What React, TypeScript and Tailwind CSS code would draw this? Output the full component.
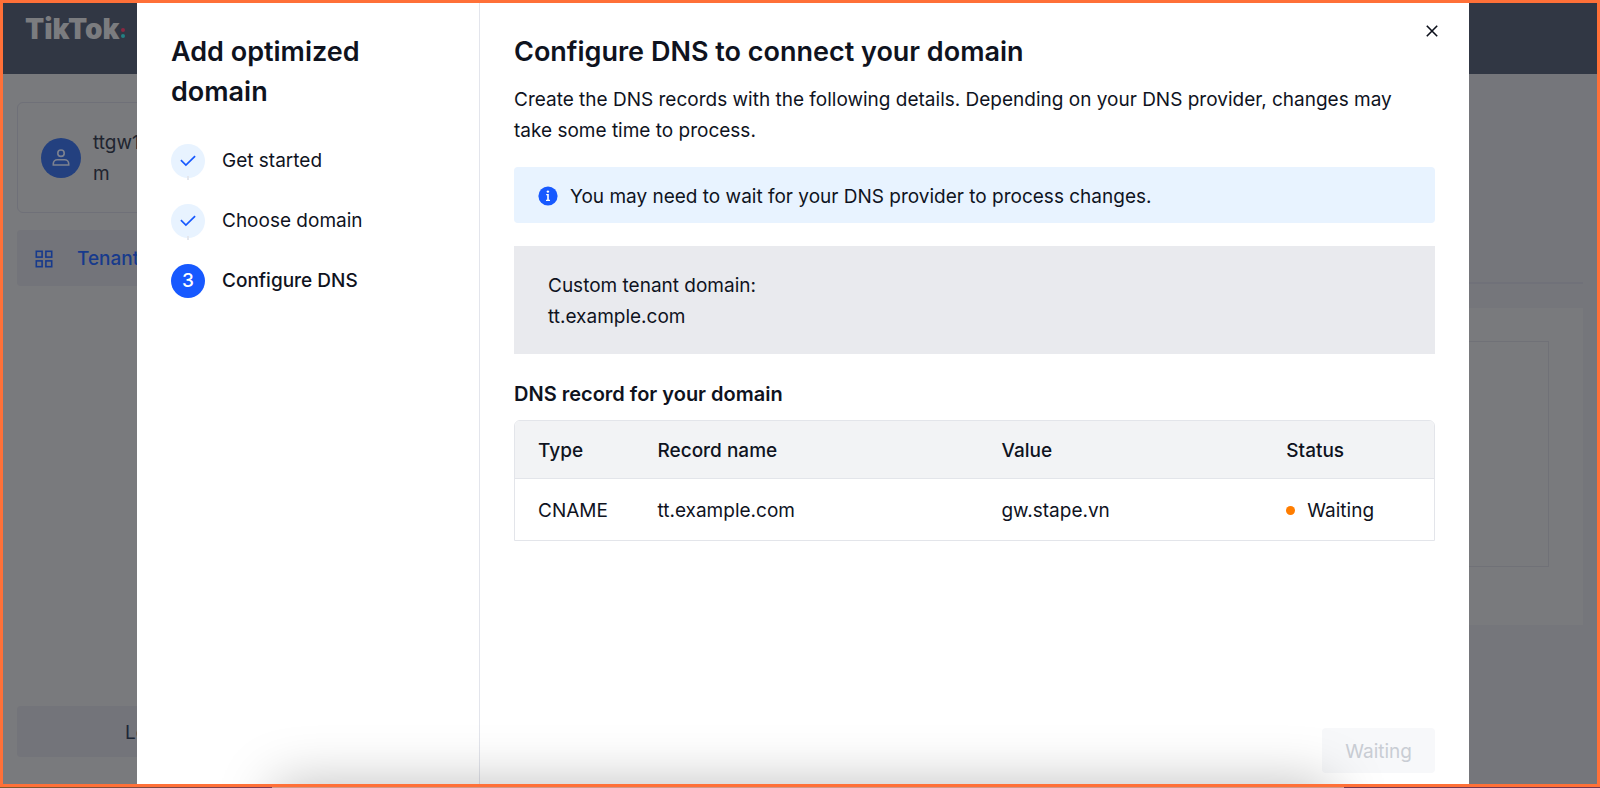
import type { ReactNode } from "react"

const steps = [
    { label: "Get started", done: true },
    { label: "Choose domain", done: true },
    { label: "Configure DNS", done: false },
]

const records = [
    { type: "CNAME", name: "tt.example.com", value: "gw.stape.vn", status: "Waiting" },
]

function CheckIcon() {
    return <svg width="16" height="12" viewBox="0 0 16 12" fill="none" stroke="#1759ff" strokeWidth="1.7" aria-hidden="true">
        <path d="M0.9 5.2 L5.9 10 L15.1 1.2" />
    </svg>
}

function UserIcon() {
    return <svg width="18" height="18" viewBox="0 0 18 18" fill="none" stroke="#7d8290" strokeWidth="1.6" aria-hidden="true">
        <circle cx="9" cy="4.2" r="3.2" />
        <path d="M1.3 16 V14.6 A4 4 0 0 1 5.3 10.8 H12.7 A4 4 0 0 1 16.7 14.6 V16 Z" />
    </svg>
}

function GridIcon() {
    return <svg width="18" height="18" viewBox="0 0 18 18" fill="none" stroke="#173a8c" strokeWidth="1.6" aria-hidden="true">
        <rect x="1.3" y="1.3" width="5.8" height="5.8" />
        <rect x="10.9" y="1.3" width="5.8" height="5.8" />
        <rect x="1.3" y="10.9" width="5.8" height="5.8" />
        <rect x="10.9" y="10.9" width="5.8" height="5.8" />
    </svg>
}

function InfoIcon() {
    return <svg width="20" height="20" viewBox="0 0 20 20" className="shrink-0" aria-hidden="true">
        <circle cx="10" cy="10" r="9.6" fill="#1759ff" />
        <g fill="#ffffff">
            <circle cx="9.9" cy="5.6" r="1.2" />
            <path d="M8.2 8 H10.8 V13.8 H12 V15 H8 V13.8 H9.2 V9.2 H8.2 Z" />
        </g>
    </svg>
}

function CloseIcon() {
    return <svg width="12" height="12" viewBox="0 0 12 12" fill="none" stroke="#0b0f1a" strokeWidth="1.6" aria-hidden="true">
        <path d="M0.8 0.8 L11.2 11.2 M11.2 0.8 L0.8 11.2" />
    </svg>
}

function Backdrop() {
    return <div className="flex h-full flex-col bg-[#75767b]">
        <header className="h-[71px] shrink-0 bg-[#313744] px-[22px] pt-1.5">
            <span className="flex items-center text-[28px] leading-10 font-black text-[#7b7c7f]">
                TikTok
                <span className="ml-0.5 mt-2 flex flex-col gap-0.5">
                    <span className="size-1 rounded-full bg-[#8a2741]" />
                    <span className="size-1 rounded-full bg-[#238083]" />
                </span>
            </span>
        </header>
        <div className="flex min-h-0 flex-1">
            <aside className="flex w-[312px] shrink-0 flex-col bg-[#797a7d] px-3.5 pt-7 pb-[27px]">
                <div className="flex h-[111px] items-center gap-3 rounded-md border border-[#6f7078] px-[23px] text-[19px] leading-[31px] text-[#20242f]">
                    <span className="flex size-10 shrink-0 items-center justify-center rounded-full bg-[#23407f]">
                        <UserIcon />
                    </span>
                    <span>ttgw1<br />m</span>
                </div>
                <a href="#tenant" className="mt-[17px] flex h-14 items-center gap-6 rounded-sm bg-[#73747a] px-[18px] pt-0.5 text-[19px] font-medium text-[#173a8c]">
                    <GridIcon />
                    Tenant
                </a>
                <button className="mt-auto h-[51px] rounded-sm bg-[#73747a] pt-1 text-[19px] text-[#1c2636]">Log out</button>
            </aside>
            <div className="flex-1 px-3.5">
                <div className="h-[210px] border-b-2 border-[#707179]" />
                <div className="mt-6 bg-[#797a7d] px-[34px] pt-[33px] pb-[58px]">
                    <div className="h-[226px] border border-[#707177]" />
                </div>
            </div>
        </div>
    </div>
}

function Stepper() {
    return <ol className="mt-8 flex flex-col gap-[26px]">
        {steps.map((step, i) => (
            <li key={step.label} className="relative flex items-center gap-[17px] text-[19px] leading-[34px]">
                {step.done && <span className="absolute top-8 left-4 h-1 w-0.5 bg-[#e4e7ee]" />}
                {step.done
                    ? <span className="flex size-[34px] items-center justify-center rounded-full bg-[#e8f3ff]"><CheckIcon /></span>
                    : <span className="flex size-[34px] items-center justify-center rounded-full bg-[#1759ff] font-medium text-white">{i + 1}</span>}
                <span className={step.done ? "" : "font-medium"}>{step.label}</span>
            </li>
        ))}
    </ol>
}

function HeadCell({ children, className }: { children: ReactNode, className?: string }) {
    return <th scope="col" className={`border-b border-[#e3e5ea] px-[23px] pt-3.5 pb-3 text-left font-medium ${className ?? ""}`}>{children}</th>
}

function Cell({ children }: { children: ReactNode }) {
    return <td className="px-[23px] pt-4 pb-3.5">{children}</td>
}

function RecordsTable() {
    return <div className="overflow-hidden rounded-t-md border border-[#e3e5ea]">
        <table className="w-full table-fixed border-collapse text-[19px] leading-[31px]">
            <thead className="bg-[#f2f3f5]">
                <tr>
                    <HeadCell className="w-[13%]">Type</HeadCell>
                    <HeadCell className="w-[344px]">Record name</HeadCell>
                    <HeadCell className="w-[31%]">Value</HeadCell>
                    <HeadCell>Status</HeadCell>
                </tr>
            </thead>
            <tbody>
                {records.map((r) => (
                    <tr key={r.name}>
                        <Cell>{r.type}</Cell>
                        <Cell>{r.name}</Cell>
                        <Cell>{r.value}</Cell>
                        <Cell>
                            <span className="flex items-center gap-3">
                                <span className="size-[9px] rounded-full bg-[#ff7d00]" />
                                {r.status}
                            </span>
                        </Cell>
                    </tr>
                ))}
            </tbody>
        </table>
    </div>
}

export default function App() {
    return <div className="h-screen bg-[linear-gradient(to_right,#7b5a2e,#7a3a55_17%,#d09a8c_17%,#d09a8c_84%,#703850_84%)] pb-px font-[Inter,sans-serif] text-[#0f131e]">
        <div className="relative h-full overflow-hidden border-[3px] border-[#ff7038]">
            <Backdrop />
            <div role="dialog" aria-modal="true" aria-labelledby="dialog-title" className="absolute inset-y-0 right-32 left-[134px] flex overflow-hidden bg-white">
                <nav className="w-[343px] shrink-0 border-r border-[#e3e5ec] px-[34px] pt-[29px]">
                    <h2 className="text-[27px] leading-10 font-semibold">Add optimized domain</h2>
                    <Stepper />
                </nav>
                <main className="flex min-w-0 flex-1 flex-col px-[34px] pt-[29px] pb-[11px]">
                    <h1 id="dialog-title" className="text-[27px] leading-10 font-semibold">Configure DNS to connect your domain</h1>
                    <p className="mt-3 text-[19px] leading-[31px]">
                        Create the DNS records with the following details. Depending on your DNS provider, changes may take some time to process.
                    </p>
                    <div role="status" className="mt-[21px] flex h-14 items-center gap-3 rounded-sm bg-[#e8f3ff] px-6 pt-0.5 text-[19px] leading-[31px]">
                        <InfoIcon />
                        You may need to wait for your DNS provider to process changes.
                    </div>
                    <div className="mt-[23px] bg-[#e9eaee] px-[34px] pt-6 pb-[22px] text-[19px] leading-[31px]">
                        <p>Custom tenant domain:</p>
                        <p>tt.example.com</p>
                    </div>
                    <h3 className="mt-[25px] mb-2.5 text-[20px] leading-[31px] font-semibold">DNS record for your domain</h3>
                    <RecordsTable />
                    <button disabled className="mt-auto h-[45px] self-end rounded-sm bg-[#f7f8fa] px-[23px] pt-1 text-[19px] text-[#c9cdd4]">Waiting</button>
                </main>
                <button aria-label="Close" className="absolute top-[22px] right-[31px] p-0">
                    <CloseIcon />
                </button>
                {/* soft shade rising from the bottom edge */}
                <div className="pointer-events-none absolute inset-x-[138px] top-full h-24 shadow-[0_0_56px_rgba(0,0,0,0.26)]" />
            </div>
        </div>
    </div>
}
